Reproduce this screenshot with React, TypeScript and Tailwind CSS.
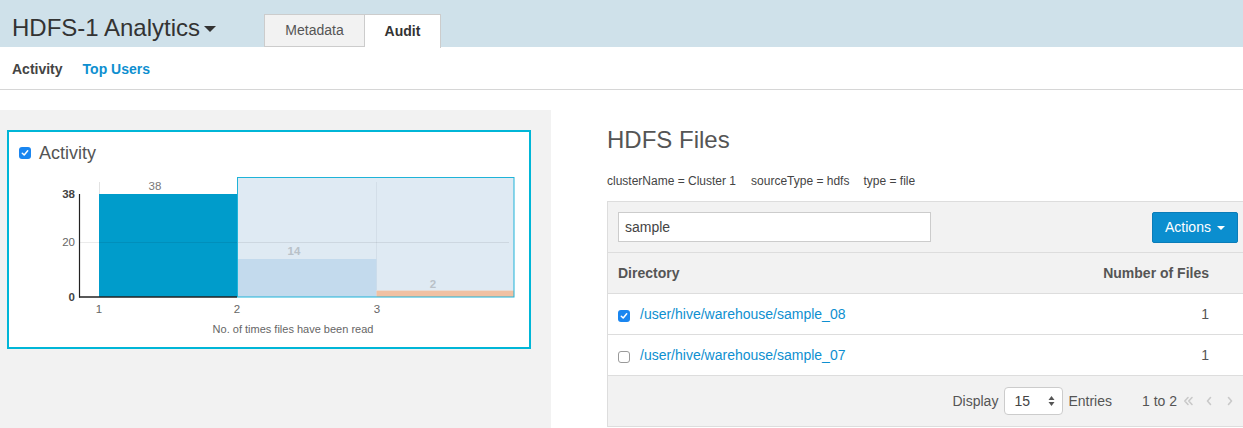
import React from "react";

function Checkbox({ checked }: { checked: boolean }) {
  if (checked) {
    return (
      <span className="flex h-[12px] w-[12px] shrink-0 items-center justify-center rounded-[3px] bg-[#1a86f0]">
        <svg width="8" height="8" viewBox="0 0 8 8">
          <path d="M1.3 4.2 L3.2 6 L6.7 1.8" fill="none" stroke="#fff" strokeWidth="1.5" strokeLinecap="round" strokeLinejoin="round" />
        </svg>
      </span>
    );
  }
  return <span className="block h-[12px] w-[12px] shrink-0 rounded-[3px] border border-[#9a9a9a] bg-white" />;
}

function Chart() {
  return (
    <svg width="520" height="177" viewBox="0 0 520 177" className="block">
      <rect x="228.5" y="7.5" width="276.5" height="119.5" fill="#dfeaf3" />
      <line x1="90.5" y1="12" x2="90.5" y2="127" stroke="#e2e2e2" strokeWidth="1" />
      <line x1="367.5" y1="12" x2="367.5" y2="121" stroke="#d3dee8" strokeWidth="1" />
      <rect x="90" y="24" width="138" height="103" fill="#009ccb" />
      <rect x="228" y="89" width="139.5" height="38" fill="#c3daed" />
      <rect x="367.5" y="121" width="137.5" height="6" fill="#f0c1a3" />
      <line x1="367.5" y1="120.5" x2="505" y2="120.5" stroke="#e8dcd4" strokeWidth="1" />
      <line x1="70" y1="72.5" x2="500" y2="72.5" stroke="rgba(0,0,0,0.08)" strokeWidth="1" />
      <rect x="228.5" y="7.5" width="276.5" height="119.5" fill="none" stroke="#1fb3d8" strokeWidth="1" />
      <line x1="70.5" y1="24" x2="70.5" y2="127.5" stroke="#222" strokeWidth="1.2" />
      <line x1="70" y1="127" x2="228" y2="127" stroke="#222" strokeWidth="1.5" />
      <g fontFamily="Liberation Sans, sans-serif" fontSize="11.5" fill="#444">
        <text x="66" y="28" textAnchor="end" fontWeight="bold">38</text>
        <text x="66" y="76" textAnchor="end" fill="#666">20</text>
        <text x="66" y="131" textAnchor="end" fontWeight="bold">0</text>
        <text x="90" y="143" textAnchor="middle" fill="#666">1</text>
        <text x="228" y="143" textAnchor="middle" fill="#666">2</text>
        <text x="368" y="143" textAnchor="middle" fill="#666">3</text>
        <text x="146" y="20" textAnchor="middle" fill="#777">38</text>
        <text x="285" y="85" textAnchor="middle" fill="#b9c1c8" fontWeight="bold">14</text>
        <text x="424" y="118" textAnchor="middle" fill="#b9c1c8" fontWeight="bold">2</text>
        <text x="284" y="163" textAnchor="middle" fill="#666" fontSize="11">No. of times files have been read</text>
      </g>
    </svg>
  );
}

function Chev({ d, color }: { d: string; color: string }) {
  return (
    <svg width="12" height="12" viewBox="0 0 12 12">
      <path d={d} fill="none" stroke={color} strokeWidth="1.6" strokeLinecap="round" strokeLinejoin="round" />
    </svg>
  );
}

export default function App() {
  return (
    <div className="h-[428px] w-[1243px] overflow-hidden bg-white text-[#333] [font-family:'Liberation_Sans',Arial,sans-serif]">
      <header className="flex h-[47px] bg-[#cfe1ea]">
        <div className="flex w-[264px] items-center pl-[12px] pt-[9px]">
          <span className="text-[24px] leading-[28px] text-[#333]">HDFS-1 Analytics</span>
          <span className="ml-[4px] mt-[2px] h-0 w-0 border-l-[6.5px] border-r-[6.5px] border-t-[6px] border-l-transparent border-r-transparent border-t-[#333]" />
        </div>
        <div className="flex items-end">
          <div className="flex h-[33px] w-[101px] items-center justify-center border border-[#cccccc] bg-[#f2f2f2] text-[14px] text-[#555]">
            Metadata
          </div>
          <div className="-mb-px flex h-[34px] w-[76px] items-center justify-center border-r border-t border-[#cccccc] bg-white pb-px text-[14px] font-bold text-[#333]">
            Audit
          </div>
        </div>
      </header>

      <nav className="flex h-[43px] items-center gap-[20px] border-b border-[#d6d6d6] pl-[12px] pt-[2px] text-[14px] font-bold">
        <span className="text-[#444]">Activity</span>
        <span className="text-[#0e8fd0]">Top Users</span>
      </nav>

      <div className="flex">
        <div className="mt-[20px] h-[318px] w-[551px] shrink-0 bg-[#f2f2f2] pl-[7px] pt-[20px]">
          <div className="h-[219px] w-[524px] border-2 border-[#00b6d7] bg-white">
            <div className="flex h-[38px] items-center gap-[8px] pl-[10px] pt-[3px]">
              <Checkbox checked />
              <span className="text-[18px] leading-[24px] text-[#555]">Activity</span>
            </div>
            <Chart />
          </div>
        </div>

        <div className="min-w-0 flex-1 overflow-hidden pl-[56px] pt-[36px]">
          <h1 className="text-[24px] leading-[28px] text-[#555]">HDFS Files</h1>
          <div className="mt-[19px] flex text-[12px] leading-[16px] text-[#444]">
            <span className="mr-[15px]">clusterName = Cluster 1</span>
            <span className="mr-[14px]">sourceType = hdfs</span>
            <span>type = file</span>
          </div>
          <div className="mt-[12px] w-[640px] border border-[#dddddd]">
            <div className="flex h-[51px] items-center justify-between border-b border-[#dddddd] bg-[#f2f2f2] pl-[10px] pr-[8px]">
              <div className="flex h-[30px] w-[313px] items-center border border-[#cccccc] bg-white pl-[6px] text-[14px] text-[#444]">
                sample
              </div>
              <div className="flex h-[31px] w-[86px] items-center justify-center gap-[6px] rounded-[2px] border border-[#0a7cb8] bg-[#0b8ecf] text-[14px] text-white">
                Actions
                <span className="mt-[1px] h-0 w-0 border-l-[4px] border-r-[4px] border-t-[4px] border-l-transparent border-r-transparent border-t-white" />
              </div>
            </div>
            <div className="flex h-[41px] items-center justify-between border-b border-[#dddddd] bg-[#f2f2f2] pl-[10px] pr-[37px] text-[14px] font-bold text-[#555]">
              <span>Directory</span>
              <span>Number of Files</span>
            </div>
            {[
              { c: true, p: "/user/hive/warehouse/sample_08" },
              { c: false, p: "/user/hive/warehouse/sample_07" },
            ].map((r) => (
              <div
                key={r.p}
                className="flex h-[41px] items-center justify-between border-b border-[#dddddd] bg-white pl-[10px] pr-[37px] text-[14px]"
              >
                <div className="flex items-center gap-[10px]">
                  <span className="mt-[3px]">
                    <Checkbox checked={r.c} />
                  </span>
                  <span className="text-[#0e8fd0]">{r.p}</span>
                </div>
                <span className="text-[#555]">1</span>
              </div>
            ))}
            <div className="flex h-[50px] items-center justify-end bg-[#f2f2f2] pr-[10px] text-[14px] text-[#555]">
              <span>Display</span>
              <div className="ml-[6px] flex h-[28px] w-[59px] items-center justify-between rounded-[4px] border border-[#cccccc] bg-white pl-[9px] pr-[7px]">
                <span className="text-[#444]">15</span>
                <svg width="7" height="12" viewBox="0 0 7 12">
                  <path d="M3.5 1 L6.5 5 L0.5 5 Z" fill="#555" />
                  <path d="M3.5 11 L6.5 7 L0.5 7 Z" fill="#555" />
                </svg>
              </div>
              <span className="ml-[5px]">Entries</span>
              <span className="ml-[30px]">1 to 2</span>
              <span className="ml-[5px] flex items-center">
                <Chev d="M6 2.5 L2.8 6 L6 9.5 M10 2.5 L6.8 6 L10 9.5" color="#c9c9c9" />
              </span>
              <span className="ml-[9px] flex items-center">
                <Chev d="M7.5 2.5 L4.5 6 L7.5 9.5" color="#c9c9c9" />
              </span>
              <span className="ml-[9px] flex items-center">
                <Chev d="M4.5 2.5 L7.5 6 L4.5 9.5" color="#c9c9c9" />
              </span>
            </div>
          </div>
        </div>
      </div>
    </div>
  );
}
